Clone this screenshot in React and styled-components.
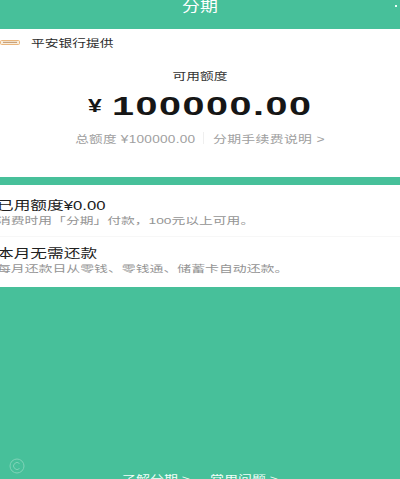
import React from 'react'
import styled, { createGlobalStyle } from 'styled-components'

const GlobalStyle = createGlobalStyle`
html, body {
  margin: 0;
  padding: 0;
  background: #47c09a;
}
* { box-sizing: border-box; }
`;

const Page = styled.div`
width: 400px;
height: 479px;
overflow: hidden;
position: relative;
background: #47c09a;
font-family: "Liberation Sans", "Noto Sans CJK SC", sans-serif;
`;

const Header = styled.div`
height: 29px;
display: flex;
align-items: flex-start;
justify-content: center;
color: #ffffff;
`;

const Dot = styled.span`
position: absolute;
top: 5px;
right: 3px;
width: 2px;
height: 2px;
background: #eafff8;
`;

const Stretch = styled.span`
display: inline-block;
white-space: nowrap;
transform: scaleX(${props => props.$x || 1.25});
transform-origin: ${props => props.$origin || 'left center'};
`;

const HeaderTitle = styled(Stretch)`
font-size: 14px;
line-height: 13px;
font-weight: 400;
`;

const Card = styled.section`
height: 148px;
background: #ffffff;
display: flex;
flex-direction: column;
`;

const Bank = styled.div`
height: 28px;
display: flex;
align-items: center;
padding-bottom: 2px;
gap: 11px;
`;

const BankName = styled(Stretch)`
font-size: 10.5px;
color: #2b2b2b;
`;

const Quota = styled.div`
display: flex;
flex-direction: column;
align-items: center;
padding-top: 13px;
`;

const QuotaLabel = styled(Stretch)`
font-size: 10px;
line-height: 14px;
color: #333333;
`;

const Amount = styled.div`
align-self: stretch;
display: flex;
align-items: center;
margin-top: 7px;
padding-left: 88px;
height: 30px;
color: #161616;
font-weight: 700;
`;

const Currency = styled(Stretch)`
font-size: 19px;
margin-right: 13.5px;
`;

const Digits = styled(Stretch)`
font-size: 26px;
letter-spacing: 1px;
`;

const Meta = styled.div`
display: flex;
align-items: center;
justify-content: center;
margin-top: 10px;
height: 14px;
font-size: 10px;
color: #a0a0a0;
`;

const MetaItem = styled(Stretch)`
letter-spacing: 0.2px;
`;

const MetaDivider = styled.i`
width: 1px;
height: 12px;
background: #efefef;
margin: 0 9px 0 8px;
`;

const Gap = styled.div`
height: 8px;
`;

const List = styled.section`
height: 102px;
background: #ffffff;
`;

const Row = styled.div`
height: ${props => props.$height}px;
padding-top: ${props => props.$top}px;
overflow: hidden;
border-bottom: ${props => (props.$line ? `1px solid #f7f7f7` : `none`)};
`;

const RowTitle = styled(Stretch)`
display: block;
margin-left: -3px;
font-size: 12px;
line-height: 16px;
color: #202020;
`;

const RowDesc = styled(Stretch)`
display: block;
margin-left: -3px;
margin-top: 0;
font-size: 9.5px;
line-height: 13px;
color: #949494;
`;

const Footer = styled.div`
position: absolute;
top: 472px;
left: 122px;
display: flex;
gap: 37px;
color: #f1fff9;
font-size: 10.5px;
line-height: 14px;
`;

const Watermark = styled.svg`
position: absolute;
left: 9px;
top: 458px;
`;

const BankLogo = () => (
  <svg width="20" height="5" viewBox="0 0 20 5" style={{ flexShrink: 0 }}>
    <rect x="0.5" y="0.5" width="19" height="4" rx="1" fill="#f9eedd" stroke="#eab67c" />
    <rect x="3" y="1.8" width="14" height="1.2" fill="#c8a27c" />
  </svg>
)

const App = () => {
  return (
    <Page>
      <GlobalStyle />
      <Header>
        <HeaderTitle $x={1.28} $origin="center">分期</HeaderTitle>
        <Dot />
      </Header>
      <Card>
        <Bank>
          <BankLogo />
          <BankName $x={1.31}>平安银行提供</BankName>
        </Bank>
        <Quota>
          <QuotaLabel $x={1.37} $origin="center">可用额度</QuotaLabel>
          <Amount>
            <Currency $x={1.3}>¥</Currency>
            <Digits $x={1.52}>100000.00</Digits>
          </Amount>
          <Meta>
            <MetaItem $x={1.36} $origin="right center">总额度 ¥100000.00</MetaItem>
            <MetaDivider />
            <MetaItem $x={1.39} $origin="left center">分期手续费说明 &gt;</MetaItem>
          </Meta>
        </Quota>
      </Card>
      <Gap />
      <List>
        <Row $line $height={52} $top={13}>
          <RowTitle $x={1.39}>已用额度¥0.00</RowTitle>
          <RowDesc $x={1.45}>消费时用「分期」付款，100元以上可用。</RowDesc>
        </Row>
        <Row $height={50} $top={9}>
          <RowTitle $x={1.39}>本月无需还款</RowTitle>
          <RowDesc $x={1.46}>每月还款日从零钱、零钱通、储蓄卡自动还款。</RowDesc>
        </Row>
      </List>
      <Footer>
        <Stretch $x={1.33}>了解分期 &gt;</Stretch>
        <Stretch $x={1.33}>常用问题 &gt;</Stretch>
      </Footer>
      <Watermark width="16" height="16" viewBox="0 0 16 16" fill="none" stroke="#7fd3b8" strokeWidth="1">
        <circle cx="8" cy="8" r="7" />
        <path d="M10.5 5.5a3.5 3.5 0 1 0 0 5" />
      </Watermark>
    </Page>
  )
}

export default App
